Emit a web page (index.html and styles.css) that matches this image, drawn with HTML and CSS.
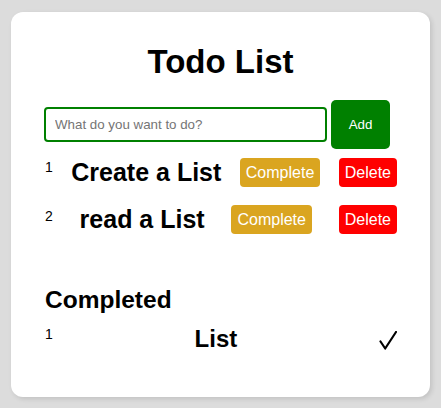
FILE: index.html
```html
<!DOCTYPE html>
<html lang="en">
<head>
<meta charset="utf-8">
<title>Todo List</title>
<link rel="stylesheet" href="styles.css">
</head>
<body>
<div class="card">
  <h1 class="title">Todo List</h1>
  <form class="add-form">
    <input class="add-input" type="text" placeholder="What do you want to do?">
    <button class="add-btn" type="button">Add</button>
  </form>
  <div class="todo-list">
    <div class="todo-row">
      <span class="num">1</span>
      <span class="todo-text">Create a List</span>
      <button class="btn btn-complete" type="button">Complete</button>
      <button class="btn btn-delete" type="button">Delete</button>
    </div>
    <div class="todo-row">
      <span class="num num-2">2</span>
      <span class="todo-text">read a List</span>
      <button class="btn btn-complete" type="button">Complete</button>
      <button class="btn btn-delete" type="button">Delete</button>
    </div>
  </div>
  <h2 class="section-title">Completed</h2>
  <div class="done-row">
    <span class="num">1</span>
    <span class="done-text">List</span>
    <svg class="check" width="18" height="19" viewBox="0 0 18 19" aria-label="done">
      <path d="M1.5 10.5 L6.2 17.5 L17 1" fill="none" stroke="#000" stroke-width="2.2" stroke-linecap="round" stroke-linejoin="round"/>
    </svg>
  </div>
</div>
</body>
</html>
```

FILE: styles.css
```css
html, body {
  margin: 0;
  padding: 0;
}

body {
  background: #dcdcdc;
  padding: 12px 11px 11px 11px;
  font-family: "Liberation Sans", Arial, sans-serif;
  color: #000;
}

.card {
  background: #fff;
  border-radius: 12px;
  box-shadow: 2px 2px 5px rgba(0, 0, 0, 0.12);
  height: 385px;
  box-sizing: border-box;
  padding: 31px 33px 0 33px;
}

.title {
  margin: 0;
  font-size: 33px;
  line-height: 37px;
  font-weight: bold;
  text-align: center;
}

.add-form {
  margin: 20px 0 0 0;
  display: flex;
  align-items: center;
  gap: 4px;
}

.add-input {
  width: 283px;
  height: 35px;
  box-sizing: border-box;
  border: 2px solid #008000;
  border-radius: 4px;
  padding: 0 9px;
  font-family: "Liberation Sans", Arial, sans-serif;
  font-size: 13.333px;
  outline: none;
}

.add-input::placeholder {
  color: #757575;
}

.add-btn {
  width: 59px;
  height: 49px;
  border: none;
  border-radius: 5px;
  background: #008000;
  color: #fff;
  font-family: "Liberation Sans", Arial, sans-serif;
  font-size: 13.333px;
  padding: 0;
}

.todo-list {
  margin-top: 9px;
  display: flex;
  flex-direction: column;
  gap: 18px;
}

.todo-row,
.done-row {
  display: flex;
  justify-content: space-between;
  align-items: flex-start;
}

.num {
  font-size: 14px;
  line-height: 16px;
  margin-top: 1px;
  padding-left: 1px;
}

.num-2 {
  margin-top: 3px;
}

.todo-text {
  font-size: 25px;
  line-height: 29px;
  font-weight: bold;
}

.btn {
  height: 29px;
  border: none;
  border-radius: 4px;
  padding: 0 6px;
  color: #fff;
  font-family: "Liberation Sans", Arial, sans-serif;
  font-size: 16px;
}

.btn-complete {
  background: #daa520;
}

.btn-delete {
  background: #ff0000;
}

.section-title {
  margin: 52px 0 0 0;
  padding-left: 1px;
  font-size: 24.5px;
  line-height: 28px;
  font-weight: bold;
}

.done-row {
  margin-top: 11px;
}

.done-text {
  font-size: 24px;
  line-height: 28px;
  font-weight: bold;
}

.check {
  display: block;
  margin-top: 6px;
}
```
